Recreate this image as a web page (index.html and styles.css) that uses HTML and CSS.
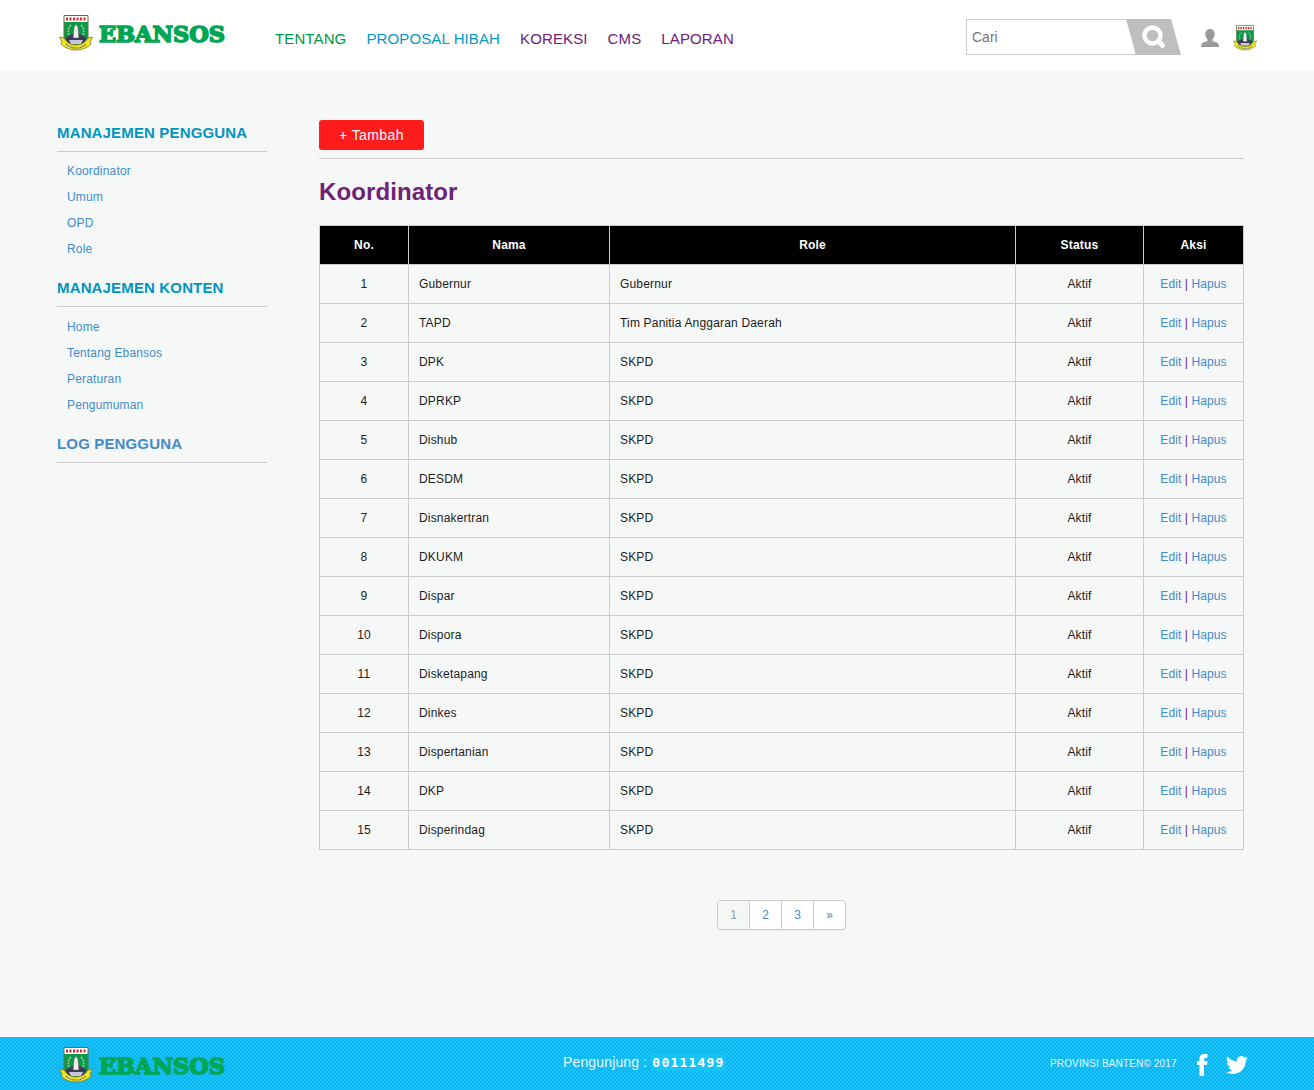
FILE: index.html
```html
<!DOCTYPE html>
<html lang="id">
<head>
<meta charset="utf-8">
<title>Ebansos - Koordinator</title>
<link rel="stylesheet" href="styles.css">
</head>
<body>
<svg width="0" height="0" class="defs" aria-hidden="true">
  <symbol id="emblem" viewBox="0 0 34 36">
    <path d="M5 .5H29V22Q29 30 17 34Q5 30 5 22Z" fill="#0a9a4a" stroke="#6b6b3a"/>
    <path d="M5.500 1H28.500V7H5.500Z" fill="#fff"/>
    <path d="M7 4H27" stroke="#e0242c" stroke-width="3" stroke-dasharray="2 1.500"/>
    <path d="M12 10Q7 15 11 22M22 10Q27 15 23 22" fill="none" stroke="#a9d49a" stroke-width="1.300" stroke-dasharray="2 1"/>
    <path d="M6 23L13 19H21L28 23L24 29H10Z" fill="#3c3a55"/>
    <path d="M15 12L17 9L19 12L20 23H14Z" fill="#eee" stroke="#555" stroke-width=".6"/>
    <path d="M10 25H24L22 29H12Z" fill="#c9c3e6"/>
    <path d="M.5 22L5 23Q9 30 17 30Q25 30 29 23L33.500 22L31 27L32 29Q26 35 17 35Q8 35 2 29L3 27Z" fill="#f4e61c" stroke="#7d7a20" stroke-width=".8"/>
    <path d="M7 29Q11 33 17 33Q23 33 27 29" fill="none" stroke="#777" stroke-width="1.600" stroke-dasharray="1.500 1"/>
  </symbol>
</svg>
<header class="header">
  <a class="logo"><svg class="emblem"><use href="#emblem"/></svg><svg class="wordmark" viewBox="0 0 128 24"><text x="1" y="20.500" textLength="126" lengthAdjust="spacingAndGlyphs">EBANSOS</text></svg></a>
  <nav class="nav">
    <a class="green">TENTANG</a><a class="blue">PROPOSAL HIBAH</a><a>KOREKSI</a><a>CMS</a><a>LAPORAN</a>
  </nav>
  <form class="search">
    <span class="search-field">Cari</span>
    <svg class="search-button" viewBox="0 0 55 36"><path d="M0 0H45L55 36H10Z" fill="#bfbfbf"/><circle cx="26.500" cy="16.500" r="8" fill="none" stroke="#fff" stroke-width="4.400"/><path d="M32.500 22.500L36.500 26.500" stroke="#fff" stroke-width="4.800" stroke-linecap="round"/></svg>
  </form>
  <svg class="user" viewBox="0 0 18 18"><path d="M9 0C6 0 4.300 2 4.300 5C4.300 7.500 5.300 9.500 6.500 10.500V12L2 13.500Q0 14.500 0 18H18Q18 14.500 16 13.500L11.500 12V10.500C12.700 9.500 13.700 7.500 13.700 5C13.700 2 12 0 9 0Z" fill="#999"/></svg>
  <svg class="avatar"><use href="#emblem"/></svg>
</header>
<main class="page">
  <aside class="sidebar">
    <h2>MANAJEMEN PENGGUNA</h2>
    <ul><li><a>Koordinator</a></li><li><a>Umum</a></li><li><a>OPD</a></li><li><a>Role</a></li></ul>
    <h2>MANAJEMEN KONTEN</h2>
    <ul class="konten"><li><a>Home</a></li><li><a>Tentang Ebansos</a></li><li><a>Peraturan</a></li><li><a>Pengumuman</a></li></ul>
    <h2><a>LOG PENGGUNA</a></h2>
  </aside>
  <section class="content">
    <div class="toolbar"><a class="add">+ Tambah</a></div>
    <h1>Koordinator</h1>
    <table>
      <colgroup><col class="c-no"><col class="c-name"><col class="c-role"><col class="c-status"><col class="c-action"></colgroup>
      <thead><tr><th>No.</th><th>Nama</th><th>Role</th><th>Status</th><th>Aksi</th></tr></thead>
      <tbody>
        <tr><td>1</td><td>Gubernur</td><td>Gubernur</td><td>Aktif</td><td><a>Edit</a> | <a>Hapus</a></td></tr>
        <tr><td>2</td><td>TAPD</td><td>Tim Panitia Anggaran Daerah</td><td>Aktif</td><td><a>Edit</a> | <a>Hapus</a></td></tr>
        <tr><td>3</td><td>DPK</td><td>SKPD</td><td>Aktif</td><td><a>Edit</a> | <a>Hapus</a></td></tr>
        <tr><td>4</td><td>DPRKP</td><td>SKPD</td><td>Aktif</td><td><a>Edit</a> | <a>Hapus</a></td></tr>
        <tr><td>5</td><td>Dishub</td><td>SKPD</td><td>Aktif</td><td><a>Edit</a> | <a>Hapus</a></td></tr>
        <tr><td>6</td><td>DESDM</td><td>SKPD</td><td>Aktif</td><td><a>Edit</a> | <a>Hapus</a></td></tr>
        <tr><td>7</td><td>Disnakertran</td><td>SKPD</td><td>Aktif</td><td><a>Edit</a> | <a>Hapus</a></td></tr>
        <tr><td>8</td><td>DKUKM</td><td>SKPD</td><td>Aktif</td><td><a>Edit</a> | <a>Hapus</a></td></tr>
        <tr><td>9</td><td>Dispar</td><td>SKPD</td><td>Aktif</td><td><a>Edit</a> | <a>Hapus</a></td></tr>
        <tr><td>10</td><td>Dispora</td><td>SKPD</td><td>Aktif</td><td><a>Edit</a> | <a>Hapus</a></td></tr>
        <tr><td>11</td><td>Disketapang</td><td>SKPD</td><td>Aktif</td><td><a>Edit</a> | <a>Hapus</a></td></tr>
        <tr><td>12</td><td>Dinkes</td><td>SKPD</td><td>Aktif</td><td><a>Edit</a> | <a>Hapus</a></td></tr>
        <tr><td>13</td><td>Dispertanian</td><td>SKPD</td><td>Aktif</td><td><a>Edit</a> | <a>Hapus</a></td></tr>
        <tr><td>14</td><td>DKP</td><td>SKPD</td><td>Aktif</td><td><a>Edit</a> | <a>Hapus</a></td></tr>
        <tr><td>15</td><td>Disperindag</td><td>SKPD</td><td>Aktif</td><td><a>Edit</a> | <a>Hapus</a></td></tr>
      </tbody>
    </table>
    <nav class="pagination"><span>1</span><a>2</a><a>3</a><a>»</a></nav>
  </section>
</main>
<footer class="footer">
  <a class="logo"><svg class="emblem"><use href="#emblem"/></svg><svg class="wordmark" viewBox="0 0 128 24"><text x="1" y="20.500" textLength="126" lengthAdjust="spacingAndGlyphs">EBANSOS</text></svg></a>
  <p class="visitors">Pengunjung : <span class="counter">00111499</span></p>
  <p class="copyright">PROVINSI BANTEN© 2017</p>
  <svg class="facebook" viewBox="0 0 11 22"><path d="M2.500 22V11H0V7H2.500V4.500Q2.500 0 7 0H10.500V4H8.500Q7 4 7 5.500V7H10.500L10 11H7V22Z" fill="#fff"/></svg>
  <svg class="twitter" viewBox="0 0 24 24"><path fill="#fff" d="M24 4.600c-.9.400-1.800.7-2.800.8 1-.6 1.800-1.600 2.200-2.700-1 .6-2 1-3.100 1.200a4.900 4.900 0 0 0-8.400 4.500C7.700 8.100 4.100 6.100 1.700 3.100a4.900 4.900 0 0 0 1.500 6.600c-.8 0-1.600-.2-2.200-.6 0 2.300 1.600 4.400 3.900 4.900-.7.200-1.500.2-2.200.1a4.900 4.900 0 0 0 4.600 3.400A9.900 9.900 0 0 1 0 19.500a14 14 0 0 0 7.600 2.200c9.100 0 14.300-7.700 14-14.600.9-.7 1.700-1.600 2.400-2.500z"/></svg>
</footer>
</body>
</html>
```
FILE: styles.css
```css
* { box-sizing: border-box; }
body { margin: 0; min-height: 1090px; display: flex; flex-direction: column; background: #f6f8f7; color: #1c1c1c; font: 12px/20px "Liberation Sans", Arial, sans-serif; }
h1, h2, p, ul { margin: 0; padding: 0; }
ul { list-style: none; }
a { color: #428bca; text-decoration: none; }
svg { display: block; flex: none; }
.defs { position: absolute; }

.header { height: 70px; background: #fff; display: flex; align-items: flex-start; padding-left: 59px; }
.logo { display: flex; width: 216px; padding-top: 15px; }
.emblem { width: 34px; height: 36px; }
.wordmark { width: 128px; height: 24px; margin: 6px 0 0 5px; overflow: visible; }
.wordmark text { font: bold 22px "DejaVu Serif", serif; fill: #00a651; stroke: #00a651; stroke-width: 1.600px; }
.nav { display: flex; gap: 20px; width: 691px; padding-top: 29px; font-size: 15px; letter-spacing: .12px; }
.nav a { color: #702076; white-space: nowrap; }
.nav .green { color: #009540; }
.nav .blue { color: #0099c4; }
.search { display: flex; width: 215px; height: 36px; margin-top: 19px; }
.search-field { flex: 1; height: 36px; margin-right: -10px; padding: 7px 5px; border: 1px solid #ccc; color: #777; font-size: 14px; }
.search-button { width: 55px; height: 36px; }
.user { width: 18px; height: 18px; margin: 29px 0 0 20px; }
.avatar { width: 24px; height: 26px; margin: 25px 0 0 14px; }

.page { flex: 1; display: flex; gap: 52px; padding: 50px 70px 0 57px; }
.sidebar { flex: none; width: 210px; letter-spacing: .17px; }
.sidebar h2 { height: 32px; padding-top: 3px; border-bottom: 1px solid #ccc; color: #0095bf; font-size: 15px; letter-spacing: .15px; white-space: nowrap; }
.sidebar ul { height: 123px; padding: 6px 10px 0; line-height: 26px; }
.sidebar .konten { height: 124px; padding-top: 7px; }
.content { flex: none; width: 925px; }
.toolbar { height: 39px; border-bottom: 1px solid #ccc; }
.add { display: block; width: 105px; height: 30px; border-radius: 3px; background: #ff1c1c; color: #fff; font-size: 14px; line-height: 30px; text-align: center; letter-spacing: .4px; }
h1 { padding: 18px 0 18px; color: #702076; font-size: 24px; line-height: 30px; letter-spacing: .1px; }
table { width: 925px; table-layout: fixed; border-collapse: collapse; letter-spacing: .18px; }
th, td { height: 39px; padding: 0 10px; border: 1px solid #ccc; text-align: left; }
th { background: #000; color: #fff; text-align: center; }
td:first-child, td:nth-child(4), td:last-child { text-align: center; }
td:last-child { color: #702076; white-space: nowrap; letter-spacing: .1px; }
.c-no { width: 89px; }
.c-name { width: 201px; }
.c-role { width: 406px; }
.c-status { width: 128px; }
.c-action { width: 100px; }
.pagination { display: flex; width: 129px; height: 30px; margin: 50px auto 0; border: 1px solid #ccc; border-radius: 4px; background: #fff; box-shadow: 0 1px 2px rgba(0, 0, 0, .05); line-height: 28px; text-align: center; overflow: hidden; }
.pagination > * { flex: 1; border-left: 1px solid #ccc; }
.pagination > :first-child { border-left: 0; background: #f5f7f6; color: #999; }

.footer { display: flex; height: 53px; padding-left: 59px; background: repeating-conic-gradient(#16c5f8 0 25%, #10b3f0 0 50%) 0 0 / 4px 4px; color: #fff; }
.footer .logo { width: 504px; padding-top: 10px; }
.visitors { width: 487px; padding-top: 15px; font-size: 14px; color: #e2f7ff; letter-spacing: .15px; white-space: nowrap; }
.counter { display: inline-block; height: 17px; padding: 0 1px; background: #16c5f8; color: #fff; font: bold 13px/17px "DejaVu Sans Mono", monospace; letter-spacing: 1.200px; vertical-align: 0; }
.copyright { width: 147px; padding-top: 17px; font-size: 10px; letter-spacing: .15px; white-space: nowrap; color: #e2f7ff; }
.facebook { width: 11px; height: 22px; margin-top: 17px; }
.twitter { width: 22px; height: 22px; margin: 17px 0 0 18px; }
```
